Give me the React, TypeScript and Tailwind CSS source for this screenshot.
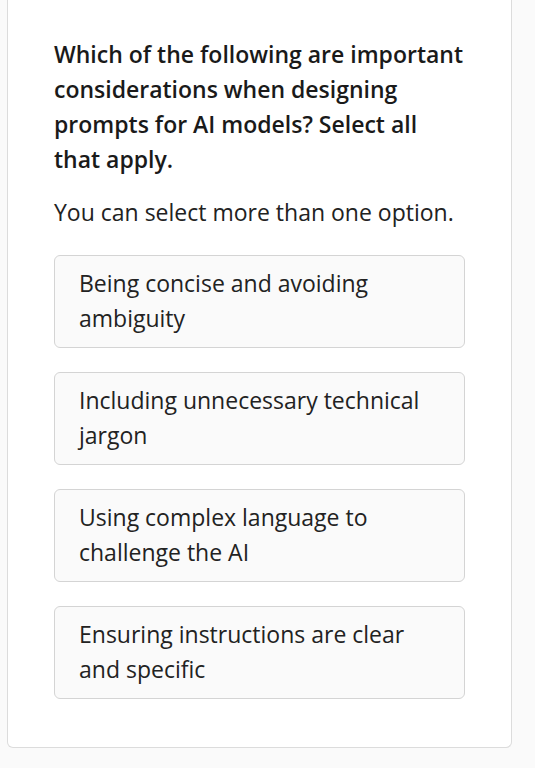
import React from "react";

const options = [
  "Being concise and avoiding ambiguity",
  "Including unnecessary technical jargon",
  "Using complex language to challenge the AI",
  "Ensuring instructions are clear and specific",
];

export default function App() {
  return (
    <div
      className="min-h-[768px] bg-[#fafafa] pl-[7px] pr-[23px]"
      style={{ fontFamily: '"Open Sans", sans-serif' }}
    >
      <div className="bg-white border border-t-0 border-[#dcdcdc] rounded-b-[6px] pt-[37px] pb-[48px] px-[46px]">
        <h2 className="text-[23px] leading-[35px] font-semibold text-[#1a1a1a]">
          Which of the following are important considerations when designing
          prompts for AI models? Select all that apply.
        </h2>
        <p className="mt-[18px] text-[23px] leading-[35px] text-[#222]">
          You can select more than one option.
        </p>
        <div className="mt-[25px] flex flex-col gap-[24px]">
          {options.map((o) => (
            <div
              key={o}
              className="bg-[#fafafa] border border-[#d4d4d4] rounded-[6px] pl-[24px] pr-[24px] pt-[10px] pb-[11px] text-[23px] leading-[35px] text-[#222]"
            >
              {o}
            </div>
          ))}
        </div>
      </div>
    </div>
  );
}
